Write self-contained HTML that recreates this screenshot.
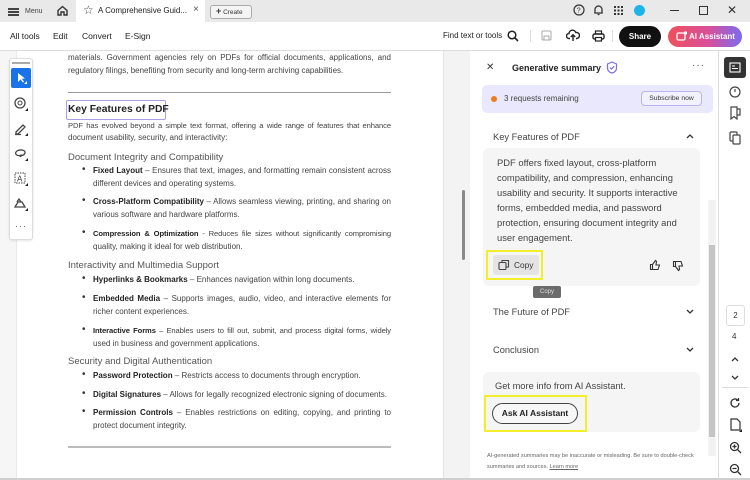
<!DOCTYPE html>
<html><head><meta charset="utf-8"><style>
*{margin:0;padding:0;box-sizing:border-box}
body{width:750px;height:480px;overflow:hidden;position:relative;font-family:"Liberation Sans",sans-serif;background:#fff;color:#222}
.a{position:absolute;white-space:nowrap}
.doc{font-size:8px;color:#444}
.doc b{color:#222}
.j{white-space:normal;text-align:justify;text-align-last:justify;height:11px;overflow:hidden}
.t{font-size:7.6px;letter-spacing:-0.1px}
.w1{width:323px}.w2{width:298px}
.sh{font-size:9.5px;color:#555}
.bul{position:absolute;left:82px;font-size:10px;color:#333}
.pt{font-size:9.4px;color:#444}
svg{position:absolute}
</style></head><body>
<!-- tab bar -->
<div class="a" style="left:0;top:0;width:750px;height:22px;background:#e9e9e9"></div>
<div class="a" style="left:76px;top:0;width:129px;height:22px;background:#fff"></div>
<div class="a" style="left:8px;top:8px;width:11px;height:1.5px;background:#444;box-shadow:0 3px 0 #444,0 6px 0 #444"></div>
<div class="a" style="left:25px;top:8px;font-size:7px;color:#444">Menu</div>
<svg style="left:56px;top:4px" width="13" height="13" viewBox="0 0 13 13"><path d="M2 6.5L6.5 2.5 11 6.5V11H8V8H5V11H2Z" fill="none" stroke="#333" stroke-width="1.4"/></svg>
<div class="a" style="left:83px;top:3px;font-size:12px;color:#444">☆</div>
<div class="a" style="left:98px;top:6px;font-size:8px;color:#222">A Comprehensive Guid...</div>
<div class="a" style="left:193px;top:4px;font-size:10px;color:#555">×</div>
<div class="a" style="left:210px;top:5px;width:42px;height:14px;border:1px solid #aaa;border-radius:3px;background:#f4f4f4;font-size:6.5px;color:#333;padding:2px 0 0 5px"><b style="font-size:9px;line-height:6px">+</b> Create</div>
<svg style="left:573px;top:4px" width="12" height="12"><circle cx="6" cy="6" r="5" fill="none" stroke="#333" stroke-width="1.2"/><text x="3.7" y="8.7" font-size="7" font-family="Liberation Sans" fill="#333">?</text></svg>
<svg style="left:593px;top:4px" width="11" height="12"><path d="M2 9V5.5a3.5 3.5 0 017 0V9H1.2h8.6M4.5 10.5h2" fill="none" stroke="#333" stroke-width="1.3"/></svg>
<div class="a" style="left:614px;top:6px;width:9px;height:9px;background:repeating-linear-gradient(90deg,#333 0 2.2px,transparent 2.2px 3.4px);-webkit-mask:repeating-linear-gradient(0deg,#000 0 2.2px,transparent 2.2px 3.4px)"></div>
<div class="a" style="left:634px;top:5px;width:11px;height:11px;border-radius:50%;background:#1fb4e8"></div>
<div class="a" style="left:670px;top:10px;width:9px;height:1.3px;background:#333"></div>
<div class="a" style="left:699px;top:6px;width:9px;height:9px;border:1.2px solid #333"></div>
<div class="a" style="left:727px;top:3px;font-size:12px;color:#333">✕</div>
<!-- toolbar -->
<div class="a" style="left:0;top:50px;width:750px;height:1px;background:#ddd"></div>
<div class="a" style="left:10px;top:31px;font-size:8.5px;color:#222">All tools</div>
<div class="a" style="left:53px;top:31px;font-size:8.5px;color:#222">Edit</div>
<div class="a" style="left:82px;top:31px;font-size:8.5px;color:#222">Convert</div>
<div class="a" style="left:125px;top:31px;font-size:8.5px;color:#222">E-Sign</div>
<div class="a" style="left:443px;top:31px;font-size:8px;color:#222">Find text or tools</div>
<svg style="left:507px;top:30px" width="12" height="12"><circle cx="5" cy="5" r="3.8" fill="none" stroke="#222" stroke-width="1.5"/><path d="M8 8l3 3" stroke="#222" stroke-width="1.6"/></svg>
<div class="a" style="left:530px;top:30px;width:1px;height:12px;background:#ddd"></div>
<svg style="left:541px;top:30px" width="11" height="11"><rect x="1" y="1" width="9" height="9" rx="1" fill="none" stroke="#aaa"/><rect x="3" y="6" width="5" height="4" fill="none" stroke="#aaa"/></svg>
<svg style="left:566px;top:29px" width="14" height="13"><path d="M4 9.5H3a2.5 2.5 0 010-5 3.5 3.5 0 016.8-1A2.7 2.7 0 0111 9.5H10M7 12V6M4.8 8L7 5.8 9.2 8" fill="none" stroke="#222" stroke-width="1.4"/></svg>
<svg style="left:592px;top:30px" width="13" height="12"><rect x="1" y="4" width="11" height="5" rx="1.5" fill="none" stroke="#222" stroke-width="1.4"/><rect x="3.5" y="1" width="6" height="3" fill="none" stroke="#222" stroke-width="1.2"/><rect x="3.5" y="7.5" width="6" height="3.5" fill="#fff" stroke="#222" stroke-width="1.2"/></svg>
<div class="a" style="left:612px;top:30px;width:1px;height:12px;background:#ddd"></div>
<div class="a" style="left:619px;top:26px;width:42px;height:21px;border-radius:11px;background:#111;color:#fff;font-size:8px;font-weight:bold;text-align:center;line-height:21px">Share</div>
<div class="a" style="left:668px;top:26px;width:74px;height:21px;border-radius:11px;background:linear-gradient(90deg,#f0505a,#d84f9a 55%,#7a6cf0);color:#fff;font-size:8px;font-weight:bold;line-height:21px;padding-left:21px">AI Assistant</div>
<svg style="left:676px;top:31px" width="12" height="11"><rect x="1" y="2" width="8" height="7" rx="1.5" fill="none" stroke="#fff" stroke-width="1.3"/><circle cx="9.5" cy="2" r="1.6" fill="#fff"/></svg>
<!-- doc area -->
<div class="a" style="left:0;top:51px;width:17px;height:429px;background:#f6f6f6;border-right:1px solid #e8e8e8"></div>
<div class="a" style="left:443px;top:51px;width:27px;height:429px;background:#f3f3f3;border-left:1px solid #e4e4e4"></div>
<div class="a" style="left:462px;top:190px;width:3px;height:70px;background:#8a8a8a;border-radius:2px"></div>
<div class="a" style="left:0;top:478px;width:750px;height:2px;background:#cfcfcf"></div>
<!-- tool palette -->
<div class="a" style="left:9px;top:58px;width:24px;height:182px;border:1px solid #ddd;border-radius:3px;background:#fff;box-shadow:0 1px 2px rgba(0,0,0,.1)"></div>
<div class="a" style="left:12px;top:62px;width:18px;height:1.5px;background:#aaa"></div>
<div class="a" style="left:11px;top:68px;width:20px;height:20px;background:#1a73e8;border-radius:2px"></div>
<svg style="left:15px;top:71px" width="14" height="14"><path d="M3 2L3 11 5.5 8.5 8 11.5 9 10.5 6.8 7.8 10 7.5Z" fill="#fff"/><path d="M12 10v3h-3z" fill="#fff"/></svg>
<svg style="left:13px;top:96px" width="16" height="16"><circle cx="7" cy="7" r="5" fill="none" stroke="#444" stroke-width="1.3"/><circle cx="7" cy="7" r="2" fill="none" stroke="#444"/><path d="M15 12v3h-3z" fill="#222"/></svg>
<svg style="left:13px;top:121px" width="16" height="16"><path d="M3 11l7-7 2 2-7 7H3z M2 13.5h6" fill="none" stroke="#444" stroke-width="1.3"/><path d="M15 12v3h-3z" fill="#222"/></svg>
<svg style="left:13px;top:146px" width="16" height="16"><path d="M9 9C3 11 1 7 4 5s9-1 8 2-4 2-5 4" fill="none" stroke="#444" stroke-width="1.3"/><path d="M15 12v3h-3z" fill="#222"/></svg>
<svg style="left:13px;top:171px" width="16" height="16"><rect x="2" y="2" width="10" height="10" fill="none" stroke="#444" stroke-dasharray="1.5 1"/><text x="4" y="10.5" font-size="8" font-family="Liberation Sans" fill="#333">A</text><path d="M15 12v3h-3z" fill="#222"/></svg>
<svg style="left:13px;top:196px" width="16" height="16"><path d="M2 11l3-5h4l3 5z M4 6l2-3 2 3" fill="none" stroke="#444" stroke-width="1.3"/><path d="M15 12v3h-3z" fill="#222"/></svg>
<div class="a" style="left:15px;top:221px;font-size:9px;color:#555;letter-spacing:1px">···</div>
<!-- doc text -->
<div class="a doc j w1" style="left:68px;top:53px">materials. Government agencies rely on PDFs for official documents, applications, and</div>
<div class="a doc" style="left:68px;top:66px">regulatory filings, benefiting from security and long-term archiving capabilities.</div>
<div class="a" style="left:68px;top:92px;width:323px;height:1px;background:#999"></div>
<div class="a" style="left:66px;top:100px;width:100px;height:20px;border:1.3px solid #a9a0e8;border-radius:2px"></div>
<div class="a" style="left:68px;top:104px;font-size:10.3px;font-weight:bold;color:#222">Key Features of PDF</div>
<div class="a doc j w1 t" style="left:68px;top:121px">PDF has evolved beyond a simple text format, offering a wide range of features that enhance</div>
<div class="a doc" style="left:68px;top:133px">document usability, security, and interactivity:</div>
<div class="a sh" style="left:68px;top:152px">Document Integrity and Compatibility</div>
<div class="bul" style="top:164px">•</div><div class="a doc j w2" style="left:93px;top:166px"><b>Fixed Layout</b> – Ensures that text, images, and formatting remain consistent across</div>
<div class="a doc" style="left:93px;top:179px">different devices and operating systems.</div>
<div class="bul" style="top:195px">•</div><div class="a doc j w2" style="left:93px;top:197px"><b>Cross-Platform Compatibility</b> – Allows seamless viewing, printing, and sharing on</div>
<div class="a doc" style="left:93px;top:210px">various software and hardware platforms.</div>
<div class="bul" style="top:227px">•</div><div class="a doc j w2 t" style="left:93px;top:229px"><b>Compression &amp; Optimization</b> - Reduces file sizes without significantly compromising</div>
<div class="a doc" style="left:93px;top:242px">quality, making it ideal for web distribution.</div>
<div class="a sh" style="left:68px;top:260px">Interactivity and Multimedia Support</div>
<div class="bul" style="top:273px">•</div><div class="a doc" style="left:93px;top:275px"><b>Hyperlinks &amp; Bookmarks</b> – Enhances navigation within long documents.</div>
<div class="bul" style="top:292px">•</div><div class="a doc j w2" style="left:93px;top:294px"><b>Embedded Media</b> – Supports images, audio, video, and interactive elements for</div>
<div class="a doc" style="left:93px;top:307px">richer content experiences.</div>
<div class="bul" style="top:324px">•</div><div class="a doc j w2 t" style="left:93px;top:326px"><b>Interactive Forms</b> – Enables users to fill out, submit, and process digital forms, widely</div>
<div class="a doc" style="left:93px;top:339px">used in business and government applications.</div>
<div class="a sh" style="left:68px;top:356px">Security and Digital Authentication</div>
<div class="bul" style="top:369px">•</div><div class="a doc" style="left:93px;top:371px"><b>Password Protection</b> – Restricts access to documents through encryption.</div>
<div class="bul" style="top:388px">•</div><div class="a doc" style="left:93px;top:390px"><b>Digital Signatures</b> – Allows for legally recognized electronic signing of documents.</div>
<div class="bul" style="top:406px">•</div><div class="a doc j w2" style="left:93px;top:408px"><b>Permission Controls</b> – Enables restrictions on editing, copying, and printing to</div>
<div class="a doc" style="left:93px;top:421px">protect document integrity.</div>
<div class="a" style="left:68px;top:446px;width:323px;height:2px;background:#bbb"></div>
<!-- panel -->
<div class="a" style="left:486px;top:62px;font-size:10px;color:#333">✕</div>
<div class="a" style="left:512px;top:63px;font-size:9px;font-weight:bold;color:#222">Generative summary</div>
<svg style="left:606px;top:61px" width="12" height="13"><path d="M6 1l4.5 2v4c0 3-2.5 4.5-4.5 5-2-.5-4.5-2-4.5-5V3z" fill="none" stroke="#7a70e6" stroke-width="1.2"/><path d="M4 6.5l1.5 1.5 2.6-2.8" fill="none" stroke="#7a70e6" stroke-width="1.2"/></svg>
<div class="a" style="left:692px;top:60px;font-size:10px;color:#444;letter-spacing:1px">···</div>
<div class="a" style="left:482px;top:85px;width:231px;height:28px;border-radius:5px;background:#e9e8fc"></div>
<div class="a" style="left:491px;top:96px;width:6px;height:6px;border-radius:50%;background:#ef7d1a"></div>
<div class="a" style="left:504px;top:94px;font-size:8px;color:#444">3 requests remaining</div>
<div class="a" style="left:641px;top:91px;width:61px;height:15px;border:1px solid #b9b4ef;border-radius:4px;background:#f2f1fd;font-size:6.8px;color:#333;text-align:center;line-height:13px">Subscribe now</div>
<div class="a" style="left:493px;top:132px;font-size:9.3px;color:#444">Key Features of PDF</div>
<svg style="left:686px;top:133px" width="8" height="6"><path d="M1 5l3-3 3 3" fill="none" stroke="#333" stroke-width="1.3"/></svg>
<div class="a" style="left:483px;top:148px;width:217px;height:138px;border-radius:6px;background:#f5f5f5"></div>
<div class="a pt" style="left:497px;top:155px;line-height:15px;white-space:normal;width:200px">PDF offers fixed layout, cross-platform<br>compatibility, and compression, enhancing<br>usability and security. It supports interactive<br>forms, embedded media, and password<br>protection, ensuring document integrity and<br>user engagement.</div>
<div class="a" style="left:486px;top:250px;width:57px;height:30px;border:2.5px solid #f2ef2a"></div>
<div class="a" style="left:493px;top:255px;width:46px;height:20px;background:#e4e4e4;border-radius:3px"></div>
<svg style="left:498px;top:259px" width="12" height="12"><rect x="1" y="3.5" width="7" height="7" rx="1" fill="none" stroke="#444" stroke-width="1.1"/><path d="M4 3.5V1.5h6.5V8H8" fill="none" stroke="#444" stroke-width="1.1"/></svg>
<div class="a" style="left:514px;top:260px;font-size:8.3px;color:#333">Copy</div>
<svg style="left:649px;top:259px" width="12" height="12"><path d="M1.5 5.5h2v5h-2z M3.5 10.5h5.5l1.5-4.5H7l.5-3.5-1-1L3.5 5.5" fill="none" stroke="#333" stroke-width="1.1"/></svg>
<svg style="left:672px;top:260px" width="12" height="12"><path d="M1.5 1.5h2v5h-2z M3.5 1.5h5.5l1.5 4.5H7l.5 3.5-1 1L3.5 6.5" fill="none" stroke="#333" stroke-width="1.1"/></svg>
<div class="a" style="left:533px;top:286px;width:28px;height:12px;background:#6b6b6b;border-radius:2px;color:#ddd;font-size:6px;text-align:center;line-height:12px">Copy</div>
<div class="a" style="left:493px;top:307px;font-size:9.3px;color:#444">The Future of PDF</div>
<svg style="left:686px;top:309px" width="8" height="6"><path d="M1 1l3 3 3-3" fill="none" stroke="#333" stroke-width="1.3"/></svg>
<div class="a" style="left:493px;top:345px;font-size:9.3px;color:#444">Conclusion</div>
<svg style="left:686px;top:347px" width="8" height="6"><path d="M1 1l3 3 3-3" fill="none" stroke="#333" stroke-width="1.3"/></svg>
<div class="a" style="left:483px;top:372px;width:217px;height:60px;border-radius:6px;background:#f5f5f5"></div>
<div class="a" style="left:495px;top:381px;font-size:9.3px;color:#444">Get more info from AI Assistant.</div>
<div class="a" style="left:484px;top:395px;width:103px;height:37px;border:2.5px solid #f2ef2a"></div>
<div class="a" style="left:492px;top:403px;width:86px;height:21px;border:1.5px solid #444;border-radius:11px;background:#f7f7f7;font-size:8.5px;font-weight:bold;color:#222;text-align:center;line-height:18px">Ask AI Assistant</div>
<div class="a" style="left:708px;top:200px;width:8px;height:256px;background:#f2f2f2"></div>
<div class="a" style="left:709px;top:245px;width:6px;height:192px;background:#c4c4c4"></div>
<div class="a" style="left:487px;top:451px;font-size:5.6px;color:#666;line-height:11px;white-space:normal;width:225px">AI-generated summaries may be inaccurate or misleading. Be sure to double-check summaries and sources. <u>Learn more</u></div>
<!-- right rail -->
<div class="a" style="left:718px;top:51px;width:1px;height:428px;background:#ddd"></div>
<div class="a" style="left:724px;top:57px;width:22px;height:21px;background:#333;border-radius:3px"></div>
<svg style="left:729px;top:62px" width="12" height="11"><rect x="1" y="1" width="10" height="9" fill="none" stroke="#fff" stroke-width="1.1"/><path d="M3 4h3M3 6.5h6" stroke="#fff"/></svg>
<svg style="left:728px;top:85px" width="14" height="14"><circle cx="7" cy="7" r="5" fill="none" stroke="#444" stroke-width="1.2"/><path d="M7 4v3" stroke="#444" stroke-width="1.2"/></svg>
<svg style="left:729px;top:106px" width="12" height="14"><path d="M2 1h6v12L5 10.5 2 13z M8 3h3v6H8" fill="none" stroke="#444" stroke-width="1.2"/></svg>
<svg style="left:729px;top:131px" width="12" height="14"><rect x="1" y="1" width="7" height="9" rx="1" fill="none" stroke="#444" stroke-width="1.2"/><rect x="4" y="4" width="7" height="9" rx="1" fill="#fff" stroke="#444" stroke-width="1.2"/></svg>
<div class="a" style="left:726px;top:305px;width:19px;height:21px;border:1px solid #ddd;border-radius:3px;font-size:8px;text-align:center;line-height:19px;color:#333">2</div>
<div class="a" style="left:732px;top:332px;font-size:8px;color:#333">4</div>
<svg style="left:731px;top:356px" width="8" height="6"><path d="M1 5l3-3 3 3" fill="none" stroke="#333" stroke-width="1.3"/></svg>
<svg style="left:731px;top:375px" width="8" height="6"><path d="M1 1l3 3 3-3" fill="none" stroke="#333" stroke-width="1.3"/></svg>
<div class="a" style="left:722px;top:387px;width:26px;height:1px;background:#ddd"></div>
<svg style="left:729px;top:397px" width="12" height="12"><path d="M10 6a4 4 0 11-1.2-2.9M9.5 1v2.5H7" fill="none" stroke="#333" stroke-width="1.3"/></svg>
<svg style="left:729px;top:418px" width="14" height="14"><path d="M2 1h6l3 3v8H2z" fill="none" stroke="#333" stroke-width="1.2"/><path d="M13 11v3h-3z" fill="#222"/></svg>
<svg style="left:729px;top:441px" width="13" height="13"><circle cx="5.5" cy="5.5" r="4" fill="none" stroke="#333" stroke-width="1.3"/><path d="M8.5 8.5L12 12M3.5 5.5h4M5.5 3.5v4" stroke="#333" stroke-width="1.3"/></svg>
<svg style="left:729px;top:463px" width="13" height="13"><circle cx="5.5" cy="5.5" r="4" fill="none" stroke="#333" stroke-width="1.3"/><path d="M8.5 8.5L12 12M3.5 5.5h4" stroke="#333" stroke-width="1.3"/></svg>
</body></html>
